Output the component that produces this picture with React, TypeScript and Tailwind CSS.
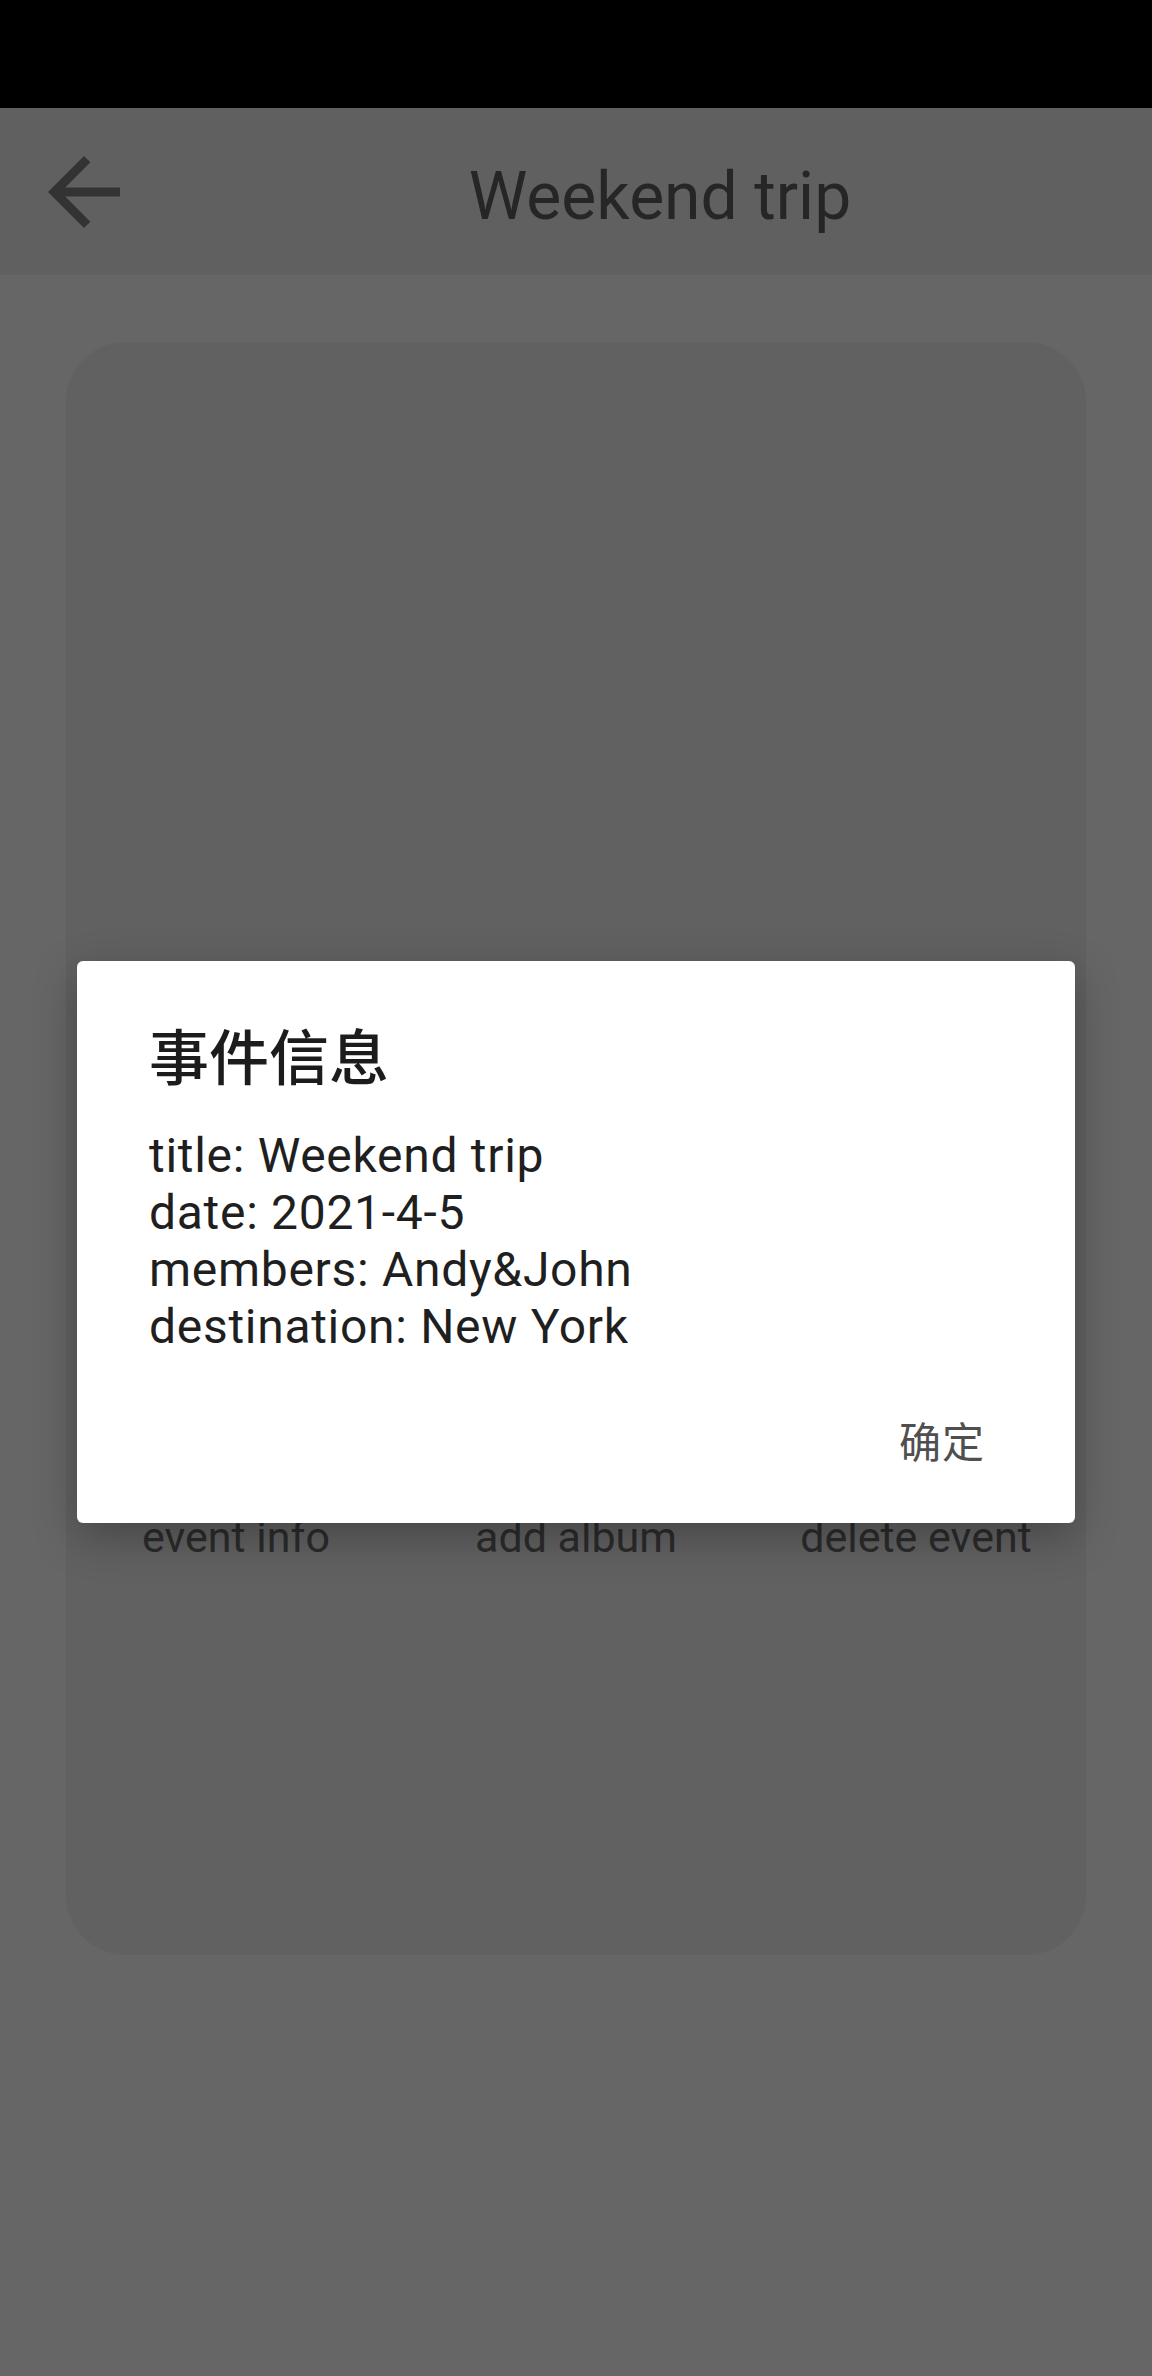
import React from "react";

export default function App() {
  return (
    <div
      className="relative w-[1152px] h-[2376px] bg-[#666666] overflow-hidden"
      style={{ fontFamily: 'Roboto, "Noto Sans CJK SC", sans-serif' }}
    >
      {/* status bar */}
      <div className="h-[108px] bg-black" />

      {/* app bar */}
      <div className="h-[167px] bg-[#606060] flex items-center">
        <div className="w-[168px] h-full flex items-center">
          <svg
            className="ml-[48px]"
            width="72"
            height="72"
            viewBox="4 4 16 16"
            fill="#333333"
          >
            <path d="M20 11H7.83l5.59-5.59L12 4l-8 8 8 8 1.41-1.41L7.83 13H20v-2z" />
          </svg>
        </div>
        <div className="flex-1 text-center text-[66px] leading-none text-[#262626] pt-[10px]">
          Weekend trip
        </div>
      </div>

      {/* card */}
      <div className="mx-[66px] mt-[67px] h-[1613px] rounded-[60px] bg-[#616161] flex flex-col">
        <div className="mt-[1163px] grid grid-cols-3 text-[43px] text-[#2b2b2b]">
          <div className="text-center">event info</div>
          <div className="text-center">add album</div>
          <div className="text-center">delete event</div>
        </div>
      </div>

      {/* dialog */}
      <div className="absolute left-[77px] top-[961px] w-[998px] h-[562px] bg-white rounded-[6px] shadow-[0_14px_44px_rgba(0,0,0,0.28)] flex flex-col">
        <div
          className="ml-[72px] mt-[63px] text-[60px] leading-[60px] font-medium text-[#1c1c1c]"
          style={{ fontFamily: '"Noto Sans CJK SC", sans-serif' }}
        >
          事件信息
        </div>
        <div className="ml-[72px] mt-[43px] text-[48px] leading-[57px] tracking-[0.7px] text-[#1f1f1f]">
          <div>title: Weekend trip</div>
          <div>date: 2021-4-5</div>
          <div>members: Andy&amp;John</div>
          <div>destination: New York</div>
        </div>
        <div className="flex justify-end mt-auto mb-[29px] mr-[66px]">
          <div
            className="h-[108px] px-[24px] flex items-center text-[42px] leading-none tracking-[1px] text-[#4f4f4f]"
            style={{ fontFamily: '"Noto Sans CJK SC", sans-serif' }}
          >
            确定
          </div>
        </div>
      </div>
    </div>
  );
}
